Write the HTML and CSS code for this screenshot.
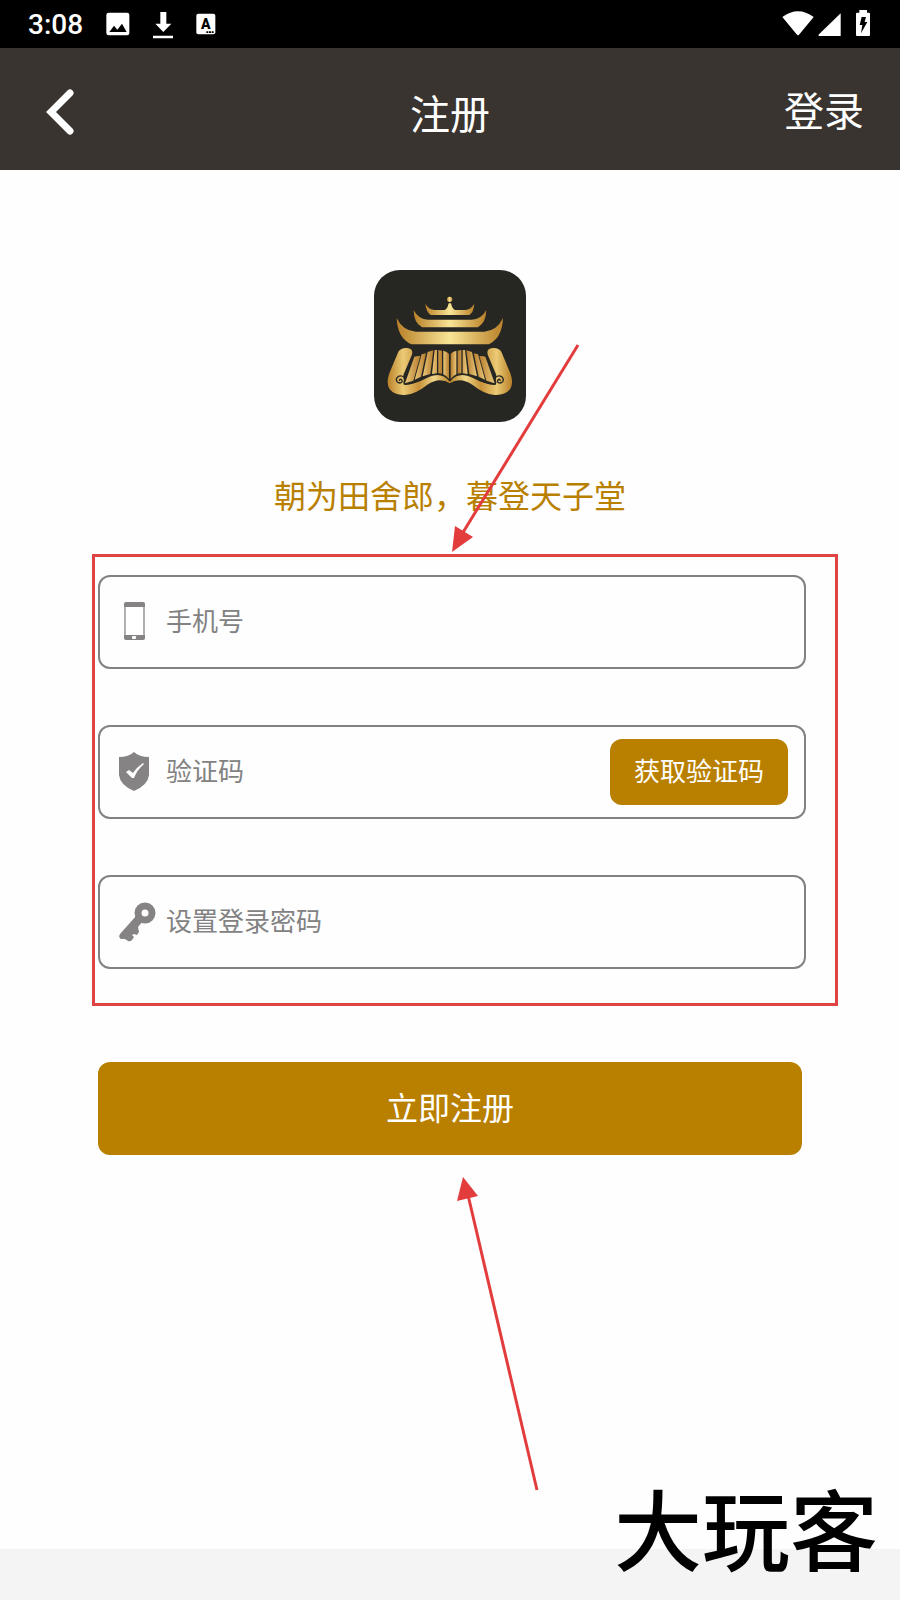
FILE: index.html
```html
<!DOCTYPE html>
<html lang="zh-CN">

<head>
  <meta charset="utf-8">
  <meta name="viewport" content="width=device-width, initial-scale=1">
  <title>注册</title>
  <link rel="stylesheet" href="styles.css">
</head>

<body>
  <div class="status-bar">
    <div class="status-left">
      <span class="clock">3:08</span>
      <svg width="24" height="30" viewBox="321 27 72 90">
        <rect x="322" y="38" width="69" height="68" rx="7" fill="#fff" />
        <path d="M331 96l14-19 10 12 14-18 14 25z" fill="#000" />
      </svg>
      <svg width="20" height="30" viewBox="459 24 60 90" fill="#fff">
        <path d="M481 33h18v35h15l-24 25-24-25h15zM459 104h60v8h-60z" />
      </svg>
      <svg width="20" height="30" viewBox="592 27 60 90">
        <rect x="593" y="41" width="57" height="62" rx="6" fill="#fff" />
        <text x="621" y="87" class="app-letter" text-anchor="middle">A</text>
        <path d="M623 94h6v5h-6zM631 94h6v5h-6zM639 94h6v5h-6z" fill="#000" />
      </svg>
    </div>
    <div class="status-right">
      <svg width="32" height="30" viewBox="242 27 96 90" fill="#fff">
        <path d="M243 51q47-34 94 0l-44 53q-3 4-6 0z" />
      </svg>
      <svg width="24" height="30" viewBox="352 27 72 90" fill="#fff">
        <path d="M420 40v68h-64q-5-1-1-5z" />
      </svg>
      <svg class="battery" width="14" height="30" viewBox="468 27 42 90">
        <path d="M478 30h23v8h6q3 0 3 3v64q0 3-3 3h-36q-3 0-3-3V41q0-3 3-3h7z" fill="#fff" />
        <path d="M485 51h13l-4 15h8l-19 34 4-25h-8z" fill="#000" />
      </svg>
    </div>
  </div>

  <header class="header">
    <button class="back" type="button" aria-label="返回">
      <svg width="28" height="48" viewBox="0 0 28 48" fill="none" stroke="#fff" stroke-width="7" stroke-linecap="round">
        <path d="M24 5L5 24l19 19" />
      </svg>
    </button>
    <h1 class="title">注册</h1>
    <a class="login" href="#">登录</a>
  </header>

  <main class="main">
    <svg class="logo" width="152" height="152" viewBox="30 30 456 456">
      <defs>
        <linearGradient id="gold">
          <stop offset="0" stop-color="#b98129" />
          <stop offset=".5" stop-color="#f8e596" />
          <stop offset="1" stop-color="#b98129" />
        </linearGradient>
        <linearGradient id="page">
          <stop offset="0" stop-color="#ecc97b" />
          <stop offset="1" stop-color="#b57c2c" />
        </linearGradient>
        <linearGradient id="ribbon">
          <stop offset="0" stop-color="#b98129" />
          <stop offset=".25" stop-color="#ecca75" />
          <stop offset=".5" stop-color="#c8923a" />
          <stop offset=".75" stop-color="#f0d688" />
          <stop offset="1" stop-color="#b98129" />
        </linearGradient>
      </defs>
      <rect x="30" y="30" width="456" height="456" rx="78" fill="#262622" />
      <g fill="url(#gold)">
        <circle cx="257" cy="118" r="8" />
        <path d="M184 131q9 17 28 19h30q9-5 12-20h7q3 15 12 20h30q19-2 28-19-1 24-15 34H200q-14-10-16-34z" />
        <path d="M149 150q14 28 43 29h131q29-1 44-29-1 38-25 52H174q-25-14-25-52z" />
        <path d="M98 174q18 38 57 41h206q38-3 56-41-2 60-43 79H142q-42-19-44-79z" />
      </g>
      <g id="scroll">
        <path d="M103 275q9-13 27-11 14 1 15 13 0 7-5 16l-22 52 4 30q30-2 63-22 45-25 73 9v8q-32-21-68 4-36 29-67 31-30 2-46-17-12-18-1-48z" fill="url(#ribbon)" />
        <path d="M107 363q-2-6 4-5 6 3 2 9-8 5-14-2-5-9 3-15 10-6 18 2 5 9-1 18M119 372q36-2 68-20 44-22 71 11" fill="none" stroke="#262622" stroke-width="4" />
        <g fill="url(#page)">
          <path d="M151 290q9-3 18-2l-21 74-25 8z" />
          <path d="M173 283l13-3-15 70-19 9z" />
          <path d="M191 276l17-5-9 71-23 7z" />
          <path d="M212 270h7v70l-15 2zM223 270l11 2v69q-6-2-11-1z" />
          <path d="M238 272q12 2 17 10v75q-7-9-17-14z" />
        </g>
      </g>
      <use href="#scroll" transform="translate(515 0) scale(-1 1)" />
    </svg>

    <p class="slogan">朝为田舍郎，暮登天子堂</p>

    <form class="form">
      <div class="fields">
        <label class="field">
          <svg width="40" height="40" viewBox="0 0 40 40">
            <rect x="7" y="1" width="19" height="36" rx="2" fill="#fff" stroke="#b0b0b0" stroke-width="2" />
            <path d="M6 5V2q0-2 2-2h17q2 0 2 2v3zM6 33h21v3q0 2-2 2H8q-2 0-2-2z" fill="#858383" />
            <rect x="14" y="34" width="4" height="3" rx="1" fill="#fff" />
          </svg>
          <input class="input" type="tel" placeholder="手机号" aria-label="手机号">
        </label>

        <div class="field">
          <svg width="40" height="40" viewBox="0 0 40 40">
            <path d="M1 5q10 0 15-5 5 5 15 5v18q-1 10-15 16Q2 33 1 23z" fill="#858383" />
            <path d="M8 20l3-2 4 3q4-6 10-10l1 1q-7 6-10 14h-2z" fill="#fff" />
          </svg>
          <input class="input" type="text" placeholder="验证码" aria-label="验证码">
          <button class="code-button" type="button">获取验证码</button>
        </div>

        <label class="field">
          <svg width="40" height="40" viewBox="0 0 40 40">
            <circle cx="27" cy="11" r="7" fill="none" stroke="#858383" stroke-width="7" />
            <path d="M18 14L2 32q-2 3 1 5h4l3 2q2 1 4-1l2-3-2-2 2-1 3 1 2-3-1-5 5-6z" fill="#858383" />
          </svg>
          <input class="input" type="password" placeholder="设置登录密码" aria-label="设置登录密码">
        </label>
      </div>

      <button class="submit" type="submit">立即注册</button>
    </form>

    <!-- pointers to the fields and the submit button -->
    <svg class="arrow arrow-fields" width="130" height="210" viewBox="0 0 130 210" fill="#e23c3d">
      <path d="M128 1L12 190" stroke="#e23c3d" stroke-width="3" />
      <path d="M2 208L5 182l18 11z" />
    </svg>
    <svg class="arrow arrow-submit" width="84" height="318" viewBox="0 0 84 318" fill="#e23c3d">
      <path d="M79 315L10 20" stroke="#e23c3d" stroke-width="3" />
      <path d="M5 2l15 19-21 5z" />
    </svg>
  </main>

  <footer class="footer">
    <span class="brand">大玩客</span>
  </footer>
</body>

</html>
```

FILE: styles.css
```css
* {
  box-sizing: border-box;
}

body {
  margin: 0;
  min-height: 100vh;
  display: flex;
  flex-direction: column;
  background-color: #fefefe;
  font-family: "Noto Sans CJK SC", sans-serif;
}

svg {
  display: block;
  flex-shrink: 0;
}

button,
input {
  font-family: inherit;
}

.status-bar {
  display: flex;
  justify-content: space-between;
  align-items: center;
  height: 48px;
  padding: 0 30px 0 28px;
  background-color: #000;
}

.status-left {
  display: flex;
  align-items: center;
  gap: 23px;
}

.status-right {
  display: flex;
  align-items: center;
  gap: 4px;
}

.battery {
  margin-left: 10px;
}

.clock {
  color: #fff;
  font-family: Roboto, sans-serif;
  font-size: 28px;
  font-weight: 500;
  line-height: 32px;
  padding-top: 2px;
}

.app-letter {
  font-family: Roboto, sans-serif;
  font-size: 42px;
  font-weight: 900;
}

.header {
  display: grid;
  grid-template-columns: 1fr auto 1fr;
  align-items: center;
  height: 122px;
  padding: 6px 36px 0;
  background-color: #3a3430;
  color: #fff;
}

.back {
  justify-self: start;
  padding: 0 10px;
  border: none;
  background: none;
  cursor: pointer;
}

.title {
  margin: 0;
  font-size: 40px;
  font-weight: 400;
  line-height: 60px;
}

.login {
  justify-self: end;
  padding-bottom: 6px;
  color: #fff;
  font-size: 40px;
  line-height: 60px;
  text-decoration: none;
}

.main {
  position: relative;
  flex: 1;
  display: flex;
  flex-direction: column;
  align-items: center;
  padding: 100px 0 60px;
}

.slogan {
  margin: 48px 0 36px;
  color: #b98000;
  font-size: 32px;
  line-height: 48px;
}

.form {
  align-self: stretch;
  display: flex;
  flex-direction: column;
  gap: 56px;
  padding: 0 62px 0 92px;
}

.fields {
  display: flex;
  flex-direction: column;
  gap: 56px;
  padding: 18px 29px 34px 3px;
  border: 3px solid #df4344;
}

.field {
  display: flex;
  align-items: center;
  gap: 8px;
  height: 94px;
  padding: 0 16px 0 18px;
  border: 2px solid #828282;
  border-radius: 12px;
}

.input {
  flex: 1;
  min-width: 0;
  height: 60px;
  padding: 0 0 6px;
  border: none;
  outline: none;
  background: none;
  color: #333;
  font-size: 26px;
}

.input::placeholder {
  color: #828282;
}

.code-button {
  height: 66px;
  padding: 0 24px 6px;
  border: none;
  border-radius: 12px;
  background-color: #b98000;
  color: #fff;
  font-size: 26px;
  cursor: pointer;
}

.submit {
  height: 93px;
  margin: 0 36px 0 6px;
  padding: 0 0 6px;
  border: none;
  border-radius: 12px;
  background-color: #b98000;
  color: #fff;
  font-size: 32px;
  cursor: pointer;
}

.arrow {
  position: absolute;
  left: 50%;
  overflow: visible;
  pointer-events: none;
}

.arrow-fields {
  top: 174px;
}

.arrow-submit {
  top: 1005px;
  margin-left: 8px;
}

.footer {
  position: relative;
  height: 51px;
  background-color: #f4f4f4;
}

.brand {
  position: absolute;
  right: 22px;
  bottom: 30px;
  color: #000;
  font-size: 88px;
  font-weight: 500;
  line-height: 88px;
}
```
